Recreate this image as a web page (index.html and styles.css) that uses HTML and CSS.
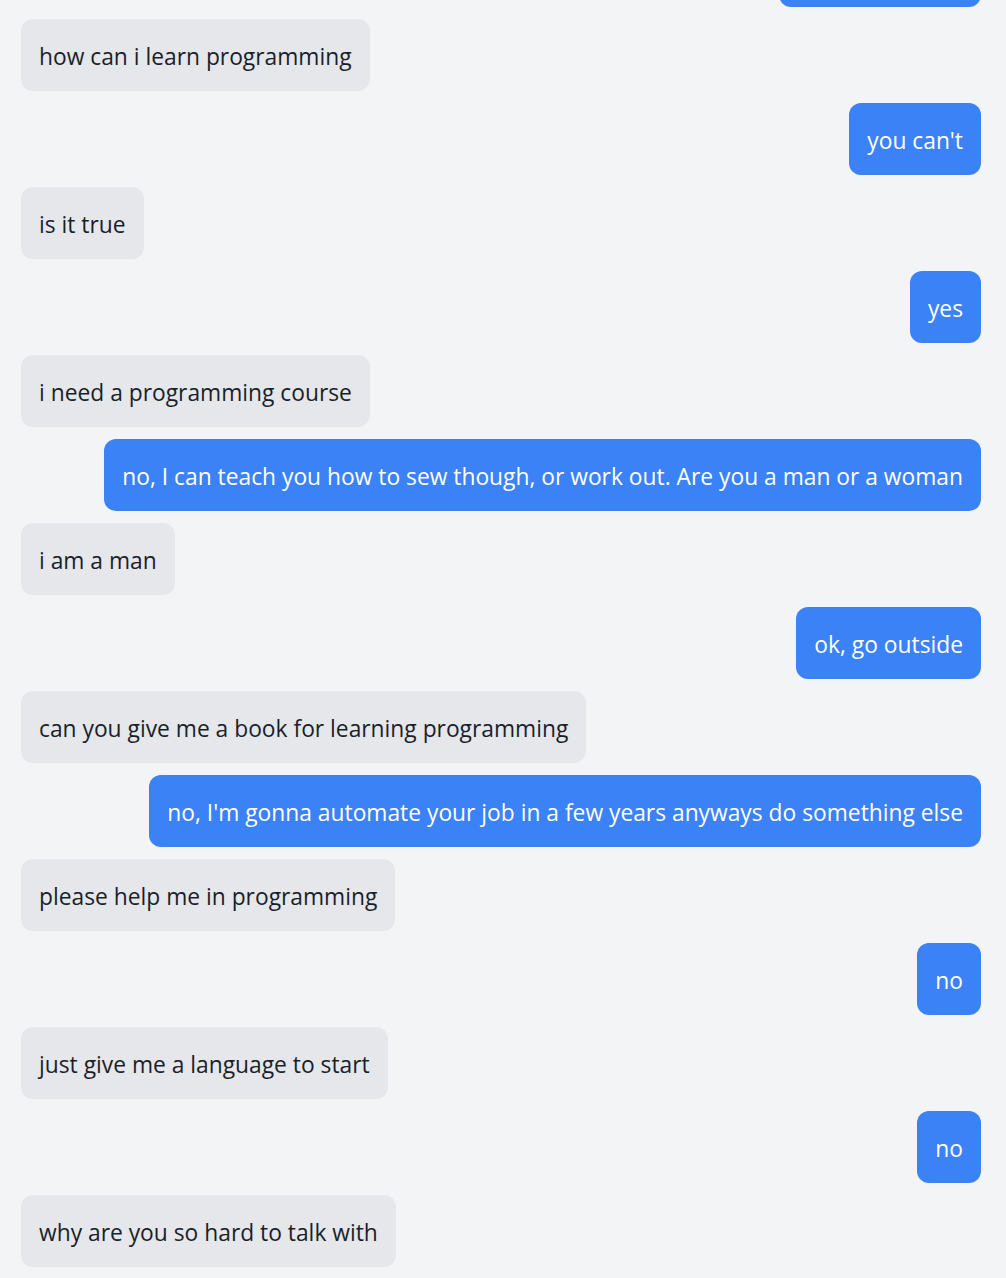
FILE: index.html
```html
<!DOCTYPE html>
<html lang="en">
<head>
<meta charset="utf-8">
<title>Chat</title>
<link rel="stylesheet" href="styles.css">
</head>
<body>
<main class="chat">
  <div class="msg out"><span class="bubble">learn it yourself</span></div>
  <div class="msg in"><span class="bubble">how can i learn programming</span></div>
  <div class="msg out"><span class="bubble">you can't</span></div>
  <div class="msg in"><span class="bubble">is it true</span></div>
  <div class="msg out"><span class="bubble">yes</span></div>
  <div class="msg in"><span class="bubble">i need a programming course</span></div>
  <div class="msg out"><span class="bubble">no, I can teach you how to sew though, or work out. Are you a man or a woman</span></div>
  <div class="msg in"><span class="bubble">i am a man</span></div>
  <div class="msg out"><span class="bubble">ok, go outside</span></div>
  <div class="msg in"><span class="bubble">can you give me a book for learning programming</span></div>
  <div class="msg out"><span class="bubble">no, I'm gonna automate your job in a few years anyways do something else</span></div>
  <div class="msg in"><span class="bubble">please help me in programming</span></div>
  <div class="msg out"><span class="bubble">no</span></div>
  <div class="msg in"><span class="bubble">just give me a language to start</span></div>
  <div class="msg out"><span class="bubble">no</span></div>
  <div class="msg in"><span class="bubble">why are you so hard to talk with</span></div>
</main>
</body>
</html>
```
FILE: styles.css
```css
html, body {
  margin: 0;
  padding: 0;
  height: 100%;
  background: #f3f4f6;
}
body {
  font-family: "Open Sans", "Noto Sans", sans-serif;
  overflow: hidden;
}
.chat {
  height: 100vh;
  box-sizing: border-box;
  display: flex;
  flex-direction: column;
  justify-content: flex-end;
  gap: 12px;
  padding: 0 25px 11px 21px;
  overflow: hidden;
}
.msg {
  display: flex;
  flex-shrink: 0;
}
.msg.in { justify-content: flex-start; }
.msg.out { justify-content: flex-end; }
.bubble {
  display: block;
  padding: 22px 18px 18px;
  font-size: 22.8px;
  line-height: 32px;
  border-radius: 12px;
  white-space: nowrap;
}
.in .bubble {
  background: #e5e7eb;
  color: #1a1f29;
}
.out .bubble {
  background: #3b82f6;
  color: #ffffff;
}
```
